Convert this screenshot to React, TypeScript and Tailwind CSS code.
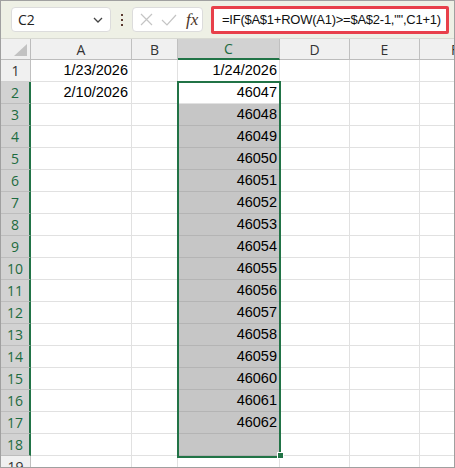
import React from "react";

const ui = "font-['Open_Sans','Noto_Sans',sans-serif]";
const cellFont = "font-['Liberation_Sans',Arial,sans-serif] text-[14.5px] text-black";

type Col = { key: string; w: string };
const cols: Col[] = [
  { key: "A", w: "w-[101px]" },
  { key: "B", w: "w-[46px]" },
  { key: "C", w: "w-[102px]" },
  { key: "D", w: "w-[70px]" },
  { key: "E", w: "w-[70px]" },
  { key: "F", w: "w-[70px]" },
];

const aVals: Record<number, string> = { 1: "1/23/2026", 2: "2/10/2026" };

function cVal(r: number): string {
  if (r === 1) return "1/24/2026";
  if (r >= 2 && r <= 17) return String(46047 + r - 2);
  return "";
}

function Cell({ col, row }: { col: Col; row: number }) {
  const inSel = col.key === "C" && row >= 3 && row <= 18;
  let text = "";
  if (col.key === "A") text = aVals[row] ?? "";
  if (col.key === "C") text = cVal(row);
  return (
    <div
      className={`${col.w} shrink-0 h-full flex items-center justify-end border-r border-b ${
        inSel ? "bg-[#c6c6c6] border-b-[#b4b4b4] border-r-[#b4b4b4]" : "bg-white border-[#e1e1e1]"
      } ${col.key === "A" ? "pr-[3px]" : "pr-[2px]"} ${cellFont}`}
    >
      {text}
    </div>
  );
}

function RowHeader({ row }: { row: number }) {
  const sel = row >= 2 && row <= 18;
  return (
    <div
      className={`w-[30px] shrink-0 h-full flex items-center justify-center border-b ${ui} text-[14px] ${
        sel
          ? "bg-[#d2d2d2] text-[#1d6b40] border-b-[#bdbdbd] border-r-2 border-r-[#217346]"
          : "bg-[#f0f0f0] text-[#333] border-b-[#d0d0d0] border-r border-r-[#c0c0c0]"
      }`}
    >
      {row}
    </div>
  );
}

export default function App() {
  const rows = Array.from({ length: 19 }, (_, i) => i + 1);
  return (
    <div className="w-[455px] h-[468px] border border-[#a0a0a0] overflow-hidden bg-white flex flex-col">
      {/* formula bar */}
      <div className="h-[38px] shrink-0 bg-[#eef0e5] border-b border-[#d8d9d2] flex items-center pl-[10px]">
        <div className="w-[100px] h-[25px] bg-white rounded-[4px] border border-[#dcdcdc] flex items-center justify-between pl-[6px] pr-[7px]">
          <span className={`${ui} text-[14px] text-[#222]`}>C2</span>
          <svg width="10" height="6" viewBox="0 0 10 6" fill="none">
            <path d="M1 1 L5 5 L9 1" stroke="#444" strokeWidth="1.3" />
          </svg>
        </div>
        <div className="w-[21px] h-[25px] flex flex-col items-center justify-center gap-[3px]">
          <span className="w-[2px] h-[2px] bg-[#5b3b30]" />
          <span className="w-[2px] h-[2px] bg-[#5b3b30]" />
          <span className="w-[2px] h-[2px] bg-[#5b3b30]" />
        </div>
        <div className="w-[71px] h-[25px] bg-white rounded-[4px] border border-[#dcdcdc] flex items-center pl-[7px]">
          <svg width="13" height="13" viewBox="0 0 13 13" fill="none">
            <path d="M1 1 L12 12 M12 1 L1 12" stroke="#c4c4c4" strokeWidth="1.2" />
          </svg>
          <svg width="16" height="12" viewBox="0 0 16 12" fill="none" className="ml-[8px]">
            <path d="M1 6 L6 11 L15 1" stroke="#c4c4c4" strokeWidth="1.2" />
          </svg>
          <span className="ml-[9px] font-['Liberation_Serif',serif] italic text-[17px] leading-none text-[#4a3528]">
            fx
          </span>
        </div>
        <div className="ml-[8px] w-[238px] h-[28px] bg-white border-[3px] border-[#e8404a] rounded-[2px] flex items-center pl-[8px]">
          <span className="font-['Liberation_Sans',Arial,sans-serif] text-[13px] tracking-[-0.25px] text-[#111] whitespace-nowrap">
            =IF($A$1+ROW(A1)&gt;=$A$2-1,"",C1+1)
          </span>
        </div>
      </div>

      {/* grid */}
      <div className="relative flex-1 overflow-hidden">
        {/* header row */}
        <div className="flex h-[21px]">
          <div className="w-[30px] shrink-0 h-full bg-[#f0f0f0] border-r border-b border-[#bcbcbc] relative">
            <svg width="29" height="20" viewBox="0 0 29 20" className="absolute left-0 top-0">
              <polygon points="26,5 26,17 13,17" fill="#c2c2c2" />
            </svg>
          </div>
          {cols.map((c) =>
            c.key === "C" ? (
              <div
                key={c.key}
                className={`${c.w} shrink-0 h-full flex items-center justify-center bg-[#d2d2d2] border-r border-r-[#c0c0c0] border-b-2 border-b-[#217346] ${ui} text-[14px] text-[#1d6b40]`}
              >
                {c.key}
              </div>
            ) : (
              <div
                key={c.key}
                className={`${c.w} shrink-0 h-full flex items-center justify-center bg-[#f0f0f0] border-r border-b border-r-[#c0c0c0] border-b-[#bcbcbc] ${ui} text-[14px] text-[#333]`}
              >
                {c.key}
              </div>
            )
          )}
        </div>
        {rows.map((r) => (
          <div key={r} className="flex h-[22px]">
            <RowHeader row={r} />
            {cols.map((c) => (
              <Cell key={c.key} col={c} row={r} />
            ))}
          </div>
        ))}

        {/* selection border */}
        <div className="absolute left-[176px] top-[42px] w-[104px] h-[377px] border-2 border-[#217346] pointer-events-none" />
        {/* fill handle */}
        <div className="absolute left-[276px] top-[413px] w-[7px] h-[7px] bg-[#217346] border border-white" />
      </div>
    </div>
  );
}
